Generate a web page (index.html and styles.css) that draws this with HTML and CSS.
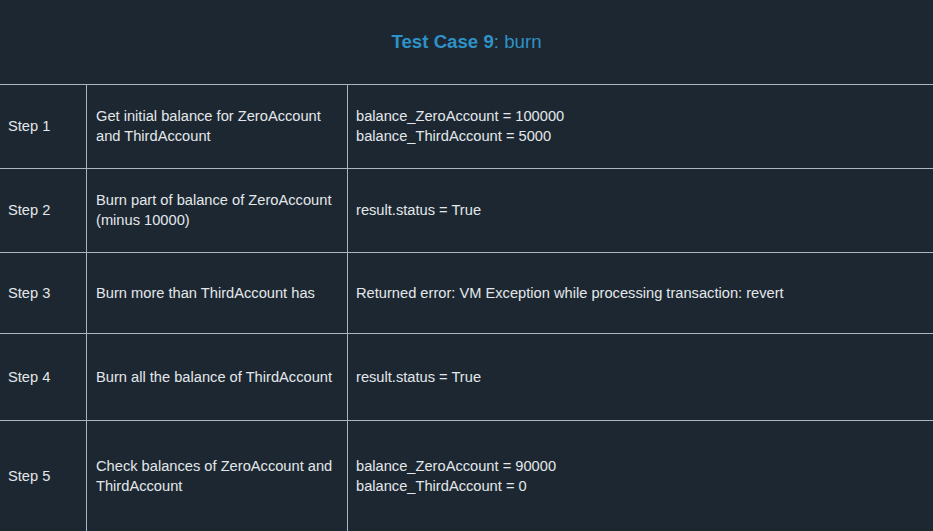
FILE: index.html
```html
<!DOCTYPE html>
<html>
<head>
<meta charset="utf-8">
<link rel="stylesheet" href="styles.css">
</head>
<body>
<div class="page">
  <header class="title"><span class="title-strong">Test Case 9</span>: burn</header>
  <div class="steps">
    <div class="cell c1 r1">Step 1</div>
    <div class="cell c2 r1">Get initial balance for ZeroAccount<br>and ThirdAccount</div>
    <div class="cell c3 r1">balance_ZeroAccount = 100000<br>balance_ThirdAccount = 5000</div>

    <div class="cell c1 r2">Step 2</div>
    <div class="cell c2 r2">Burn part of balance of ZeroAccount<br>(minus 10000)</div>
    <div class="cell c3 r2">result.status = True</div>

    <div class="cell c1 r3">Step 3</div>
    <div class="cell c2 r3">Burn more than ThirdAccount has</div>
    <div class="cell c3 r3">Returned error: VM Exception while processing transaction: revert</div>

    <div class="cell c1 r4">Step 4</div>
    <div class="cell c2 r4">Burn all the balance of ThirdAccount</div>
    <div class="cell c3 r4">result.status = True</div>

    <div class="cell c1 r5">Step 5</div>
    <div class="cell c2 r5">Check balances of ZeroAccount and<br>ThirdAccount</div>
    <div class="cell c3 r5">balance_ZeroAccount = 90000<br>balance_ThirdAccount = 0</div>
  </div>
</div>
</body>
</html>
```
FILE: styles.css
```css
html, body {
  margin: 0;
  padding: 0;
  background: #1d2731;
  overflow: hidden;
}
.page {
  width: 933px;
  height: 531px;
  overflow: hidden;
  font-family: "Liberation Sans", Arial, sans-serif;
  color: #e3e7eb;
}
.title {
  height: 84px;
  display: flex;
  align-items: center;
  justify-content: center;
  font-size: 18.67px;
  color: #2f92c7;
  padding-bottom: 1px;
  box-sizing: border-box;
}
.title-strong {
  font-weight: bold;
}
.steps {
  display: grid;
  grid-template-columns: 86px 261px 1fr;
  grid-template-rows: 84px 84px 81px 87px 112px;
  font-size: 14.67px;
  line-height: 20px;
}
.cell {
  box-sizing: border-box;
  border-top: 1px solid #a7b6c2;
  display: flex;
  align-items: center;
  padding-bottom: 1px;
}
.c1 {
  padding-left: 8px;
}
.c2, .c3 {
  border-left: 1px solid #a7b6c2;
  padding-left: 9px;
}
.c3 {
  padding-left: 8px;
}
```
